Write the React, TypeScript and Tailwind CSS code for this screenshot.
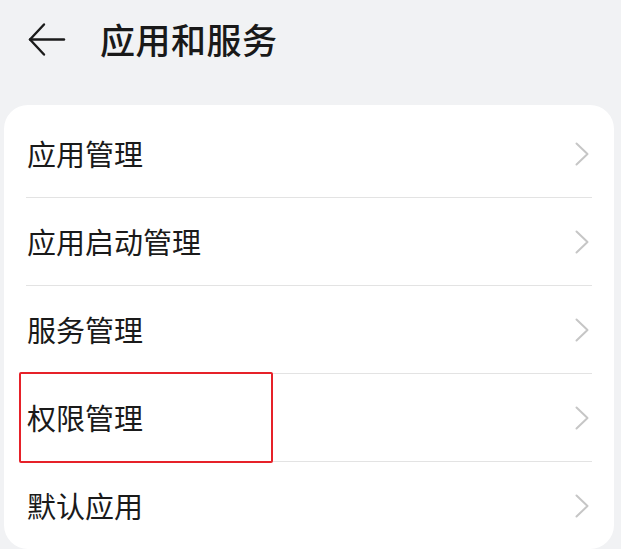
import React from 'react';

const ITEMS = ['应用管理', '应用启动管理', '服务管理', '权限管理', '默认应用'];

const Chevron = () => (
  <svg width="14" height="24" viewBox="0 0 14 24" fill="none">
    <path d="M1.5 1.5 L12.5 12 L1.5 22.5" stroke="#c6c6c6" strokeWidth="2" strokeLinecap="round" strokeLinejoin="round" />
  </svg>
);

export default function App() {
  return (
    <div
      className="w-[621px] h-[549px] overflow-hidden bg-[#f1f2f4] relative"
      style={{ fontFamily: '"Noto Sans CJK SC", "Noto Sans", sans-serif' }}
    >
      {/* header */}
      <div className="h-[105px] flex items-start pt-[18px]">
        <div className="w-[100px] h-[42px] flex items-center">
          <svg width="40" height="36" viewBox="0 0 40 36" fill="none" className="ml-[27px]">
            <path d="M3 18.5 H37" stroke="#1b1b1b" strokeWidth="2.4" strokeLinecap="round" />
            <path d="M17 3.5 L3 18.5 L17 33.5" stroke="#1b1b1b" strokeWidth="2.4" strokeLinecap="round" strokeLinejoin="round" />
          </svg>
        </div>
        <h1 className="text-[35px] leading-[42px] font-medium text-[#191919] tracking-[0.5px]">应用和服务</h1>
      </div>

      {/* list card */}
      <div className="ml-[4px] w-[610px] h-[444px] bg-white rounded-[24px] pt-[5px]">
        {ITEMS.map((item, i) => (
          <div key={item}>
            <div className="h-[87px] flex items-center justify-between pl-[23px] pr-[25px]">
              <span className="text-[29px] leading-none text-[#1a1a1a]">{item}</span>
              <Chevron />
            </div>
            {i < ITEMS.length - 1 && <div className="mx-[22px] h-px bg-[#e3e3e3]" />}
          </div>
        ))}
      </div>

      {/* highlight box */}
      <div className="absolute left-[19px] top-[372px] w-[254px] h-[91px] border-[2.5px] border-[#e62129] rounded-[2px]" />
    </div>
  );
}
